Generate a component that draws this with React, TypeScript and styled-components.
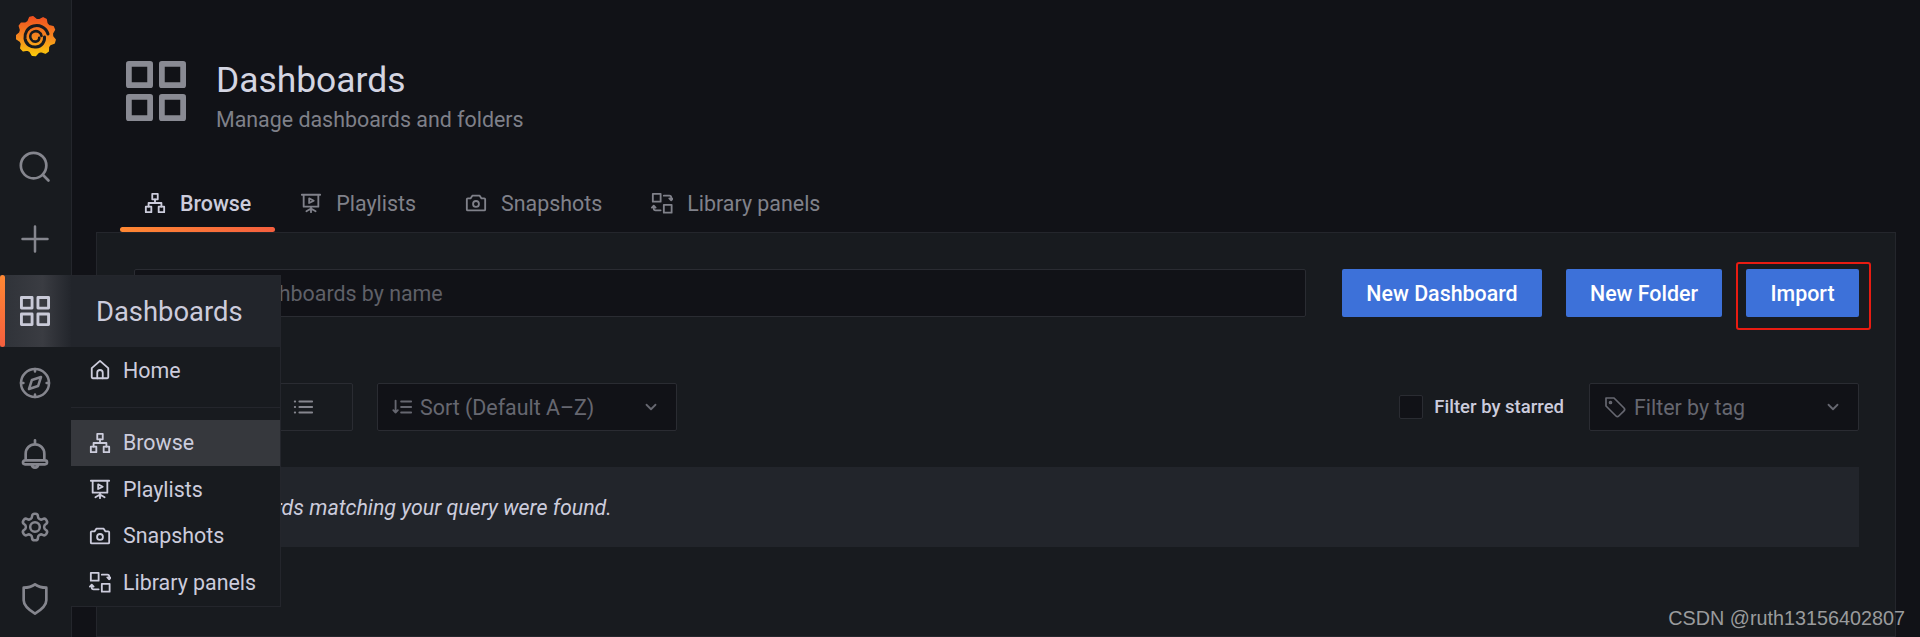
import React from "react";
import styled, { createGlobalStyle } from "styled-components";

const Global = createGlobalStyle`
  html, body { margin: 0; padding: 0; background: #111217; }
  * { box-sizing: border-box; }
  body { font-family: Roboto, "Liberation Sans", sans-serif; color: #ccccdc; }
`;

const Page = styled.div`
  position: relative;
  display: flex;
  width: 1920px;
  height: 637px;
  overflow: hidden;
  background: #111217;
`;

const Sidebar = styled.nav`
  flex: 0 0 72px;
  display: flex;
  flex-direction: column;
  background: #181b1f;
  border-right: 1px solid #24262c;
  position: relative;
`;

const LogoSlot = styled.div`
  height: 131px;
  display: flex;
  justify-content: center;
  align-items: flex-start;
  padding-top: 15px;
`;

const SideItem = styled.div<{ $active?: boolean }>`
  position: relative;
  flex: 0 0 72px;
  display: flex;
  align-items: center;
  justify-content: center;
  padding-right: 1px;
  color: ${(p) => (p.$active ? "#c9cad8" : "#85868e")};
  background: ${(p) => (p.$active ? "linear-gradient(90deg,#2f3238 0%,#3a3c42 60%,#23262c 100%)" : "transparent")};
  ${(p) =>
    p.$active &&
    `&::before{content:"";position:absolute;left:0;top:0;bottom:0;width:5px;border-radius:3px;background:linear-gradient(180deg,#ff8833,#f55f3e);}`}
`;

const Main = styled.main`
  flex: 1;
  display: flex;
  flex-direction: column;
  padding: 0 24px 0 24px;
  min-width: 0;
`;

const Header = styled.header`
  display: flex;
  align-items: flex-start;
  padding: 62px 0 0 30px;
  height: 178px;
`;

const HeaderIcon = styled.div`
  width: 60px;
  height: 60px;
  margin: -1px 30px 0 0;
  color: #898a93;
`;

const Title = styled.h1`
  margin: 0;
  font-weight: 400;
  font-size: 35.4px;
  line-height: 37px;
  color: #d4d5e2;
`;

const Subtitle = styled.div`
  margin-top: 8px;
  font-size: 21.4px;
  line-height: 26px;
  color: #7f8089;
`;

const Tabs = styled.div`
  display: flex;
  padding-left: 24px;
  height: 54px;
`;

const Tab = styled.div<{ $active?: boolean }>`
  position: relative;
  display: flex;
  align-items: center;
  gap: 14px;
  padding: 0 24px;
  height: 50px;
  margin-right: 1px;
  font-size: 21.4px;
  font-weight: ${(p) => (p.$active ? 500 : 400)};
  color: ${(p) => (p.$active ? "#ccccdc" : "#80818a")};
  ${(p) =>
    p.$active &&
    `&::after{content:"";position:absolute;left:0;right:0;bottom:-4px;height:5px;border-radius:3px;background:linear-gradient(90deg,#ff8833,#f55f3e);}`}
`;

const Panel = styled.section`
  flex: 1;
  background: #181b1f;
  border: 1px solid #24262c;
  padding: 36px 36px 0 37px;
`;

const TopRow = styled.div`
  display: flex;
  align-items: center;
  height: 48px;
`;

const SearchInput = styled.div`
  flex: 1;
  height: 48px;
  display: flex;
  align-items: center;
  padding-left: 38px;
  background: #111217;
  border: 1px solid #2a2c32;
  border-radius: 2px;
  font-size: 21.4px;
  color: #5f6068;
`;

const Button = styled.div<{ $width: number; $gap: number }>`
  flex: 0 0 ${(p) => p.$width}px;
  margin-left: ${(p) => p.$gap}px;
  height: 48px;
  display: flex;
  align-items: center;
  justify-content: center;
  background: #3d71d9;
  border-radius: 2px;
  color: #fff;
  font-size: 21.4px;
  font-weight: 500;
`;

const Highlight = styled.div`
  position: absolute;
  left: 1736px;
  top: 262px;
  width: 135px;
  height: 68px;
  border: 2px solid #e81c12;
  border-radius: 3px;
`;

const FilterRow = styled.div`
  display: flex;
  align-items: center;
  margin-top: 66px;
  height: 48px;
`;

const Toggle = styled.div`
  width: 219px;
  height: 48px;
  display: flex;
  align-items: center;
  justify-content: flex-end;
  padding-right: 38px;
  border: 1px solid #2a2c32;
  border-radius: 2px;
  color: #85868e;
`;

const Select = styled.div<{ $width: number }>`
  flex: 0 0 ${(p) => p.$width}px;
  height: 48px;
  display: flex;
  align-items: center;
  gap: 7px;
  padding: 0 16px 0 13px;
  background: #111217;
  border: 1px solid #2a2c32;
  border-radius: 2px;
  font-size: 21.4px;
  color: #666770;
`;

const SelectLabel = styled.span`
  flex: 1;
`;

const Sort = styled(Select)`
  margin-left: 24px;
`;

const Checkbox = styled.div`
  margin-left: auto;
  width: 24px;
  height: 24px;
  background: #111217;
  border: 1px solid #2a2c32;
  border-radius: 2px;
`;

const CheckLabel = styled.span`
  margin: 0 25px 0 11px;
  font-size: 18.5px;
  font-weight: 500;
  color: #ccccdc;
`;

const Message = styled.div`
  margin-top: 36px;
  height: 80px;
  display: flex;
  align-items: center;
  padding-left: 29px;
  background: #22252b;
  font-size: 21.4px;
  font-style: italic;
  color: #ccccdc;
`;

const Menu = styled.div`
  position: absolute;
  left: 71px;
  top: 275px;
  width: 210px;
  height: 332px;
  background: #181b1f;
  border: 1px solid #24262c;
  border-left: 0;
`;

const MenuHead = styled.div`
  height: 71px;
  display: flex;
  align-items: center;
  padding-left: 25px;
  background: #22252b;
  font-size: 27.4px;
  color: #ccccdc;
`;

const MenuItem = styled.div<{ $active?: boolean }>`
  height: 46.5px;
  display: flex;
  align-items: center;
  gap: 12px;
  padding-left: 18px;
  font-size: 21.4px;
  color: #ccccdc;
  background: ${(p) => (p.$active ? "#36383d" : "transparent")};
`;

const Divider = styled.div`
  height: 1px;
  margin: 13px 0 12px;
  background: #24262c;
`;

const Watermark = styled.div`
  position: absolute;
  right: 15px;
  bottom: 7px;
  font-family: "Liberation Sans", sans-serif;
  font-size: 19.8px;
  color: #9a9b9d;
`;

type IconProps = { size?: number };

const Svg: React.FC<IconProps & { children: React.ReactNode; w?: number }> = ({ size = 22, children, w = 2 }) => (
  <svg width={size} height={size} viewBox="0 0 24 24" fill="none" stroke="currentColor" strokeWidth={w} strokeLinecap="round" strokeLinejoin="round">
    {children}
  </svg>
);

const Apps: React.FC<{ size?: number; w?: number }> = ({ size = 30, w = 2.3 }) => (
  <svg width={size} height={size} viewBox="0 0 24 24" fill="none" stroke="currentColor" strokeWidth={w} strokeLinejoin="round">
    <rect x="1.15" y="1.15" width="8.5" height="8.5" />
    <rect x="14.35" y="1.15" width="8.5" height="8.5" />
    <rect x="1.15" y="14.35" width="8.5" height="8.5" />
    <rect x="14.35" y="14.35" width="8.5" height="8.5" />
  </svg>
);

const Sitemap = () => (
  <Svg w={2}>
    <rect x="9" y="2" width="6" height="6" />
    <rect x="2" y="16" width="6" height="6" />
    <rect x="16" y="16" width="6" height="6" />
    <path d="M12 8v4M5 16v-4h14v4" />
  </Svg>
);

const PlaylistIcon = () => (
  <Svg w={2}>
    <path d="M2 3h20M4 3v13h16V3M12 16v6M12 18l-5 3M12 18l5 3" />
    <path d="M10 7l5 2.5-5 2.5z" />
  </Svg>
);

const CameraIcon = () => (
  <Svg w={2}>
    <path d="M3 7h3l2-3h8l2 3h3a1 1 0 0 1 1 1v11a1 1 0 0 1-1 1H3a1 1 0 0 1-1-1V8a1 1 0 0 1 1-1z" />
    <circle cx="12" cy="13" r="3.2" />
  </Svg>
);

const LibraryIcon = () => (
  <Svg w={2}>
    <rect x="2" y="2" width="8.5" height="8.5" />
    <rect x="14" y="14" width="8.5" height="8.5" />
    <path d="M14 4h6a2 2 0 0 1 2 2v3M20 7l2 2 2-2M10.5 20H5a2 2 0 0 1-2-2v-3M1 17l2-2 2 2" />
  </Svg>
);

const HomeIcon = () => (
  <Svg w={2}>
    <path d="M4 21a1 1 0 0 1-1-1V10l9-8 9 8v10a1 1 0 0 1-1 1z" />
    <path d="M9 21v-6a3 3 0 0 1 6 0v6" />
  </Svg>
);

const Chevron = () => (
  <Svg size={18} w={2.4}>
    <path d="M6 9l6 6 6-6" />
  </Svg>
);

const Logo = () => {
  const teeth = 9;
  let d = "";
  for (let i = 0; i < teeth * 4; i++) {
    const a = (i / (teeth * 4)) * Math.PI * 2 - 1.2;
    const r = i % 4 === 0 || i % 4 === 1 ? 19.5 : 16.5;
    d += `${i === 0 ? "M" : "L"}${(20 + r * Math.cos(a)).toFixed(2)} ${(21 + r * Math.sin(a)).toFixed(2)}`;
  }
  return (
    <svg width="40" height="42" viewBox="0 0 40 42">
      <defs>
        <linearGradient id="lg" x1="0" y1="0" x2="0" y2="1">
          <stop offset="0" stopColor="#f0501f" />
          <stop offset="0.55" stopColor="#f58a1f" />
          <stop offset="1" stopColor="#fbca0a" />
        </linearGradient>
      </defs>
      <path d={d + "Z"} fill="url(#lg)" stroke="url(#lg)" strokeWidth="1.5" strokeLinejoin="round" />
      <path d="M32 19 C30 12 23 9.5 17.5 11 C11.5 12.5 8.5 18 9 23.5 C9.8 29.5 15 32.5 20 32 C25.5 31.5 29 27 28.5 22" fill="none" stroke="#181b1f" strokeWidth="3" strokeLinecap="round" />
      <path d="M25.5 21 C25 17 21 15.5 18 16.5 C15 17.5 13.8 20.5 14.5 23 C15.3 25.8 18 27 20.5 26.5 C22.5 26 23.5 24.2 23.2 22.8" fill="none" stroke="#181b1f" strokeWidth="2.6" strokeLinecap="round" />
    </svg>
  );
};

const ListIcon = () => (
  <Svg size={22} w={2}>
    <path d="M8 6h14M8 12h14M8 18h14M3 6h.5M3 12h.5M3 18h.5" />
  </Svg>
);

const SortIcon = () => (
  <Svg size={22} w={2}>
    <path d="M5 5v13M2.5 15.5L5 18l2.5-2.5M11 6h11M11 12h11M11 18h11" />
  </Svg>
);

const TagIcon = () => (
  <Svg size={24} w={1.7}>
    <path d="M3 3h8l10 10a2 2 0 0 1 0 2.8L15.8 21a2 2 0 0 1-2.8 0L3 11z" />
    <circle cx="7.5" cy="7.5" r="1" />
  </Svg>
);

const SearchIcon = () => (
  <Svg size={34} w={1.9}>
    <circle cx="11" cy="11" r="9" />
    <path d="M21.5 21.5l-4-4" />
  </Svg>
);

const PlusIcon = () => (
  <Svg size={30} w={2}>
    <path d="M12 2v20M2 12h20" />
  </Svg>
);

const CompassIcon = () => (
  <Svg size={32} w={1.9}>
    <circle cx="12" cy="12" r="10.5" />
    <path d="M16.5 7.5l-2.2 6.8-6.8 2.2 2.2-6.8z" />
    <path d="M12 1.5v1.8M12 20.7v1.8M1.5 12h1.8M20.7 12h1.8" />
  </Svg>
);

const BellIcon = () => (
  <Svg size={32} w={2}>
    <path d="M12 1v2.5M5 16v-5a7 7 0 0 1 14 0v5M3 17.5a1.5 1.5 0 0 1 1.5-1.5h15a1.5 1.5 0 0 1 0 3h-15A1.5 1.5 0 0 1 3 17.5zM9.5 19a2.5 2.5 0 0 0 5 0" />
  </Svg>
);

const GearIcon = () => (
  <Svg size={32} w={1.9}>
    <path d="M12.22 2h-.44a2 2 0 0 0-2 2v.18a2 2 0 0 1-1 1.73l-.43.25a2 2 0 0 1-2 0l-.15-.08a2 2 0 0 0-2.73.73l-.22.38a2 2 0 0 0 .73 2.73l.15.1a2 2 0 0 1 1 1.72v.51a2 2 0 0 1-1 1.74l-.15.09a2 2 0 0 0-.73 2.73l.22.38a2 2 0 0 0 2.73.73l.15-.08a2 2 0 0 1 2 0l.43.25a2 2 0 0 1 1 1.73V20a2 2 0 0 0 2 2h.44a2 2 0 0 0 2-2v-.18a2 2 0 0 1 1-1.73l.43-.25a2 2 0 0 1 2 0l.15.08a2 2 0 0 0 2.73-.73l.22-.39a2 2 0 0 0-.73-2.73l-.15-.08a2 2 0 0 1-1-1.74v-.5a2 2 0 0 1 1-1.74l.15-.09a2 2 0 0 0 .73-2.73l-.22-.38a2 2 0 0 0-2.73-.73l-.15.08a2 2 0 0 1-2 0l-.43-.25a2 2 0 0 1-1-1.73V4a2 2 0 0 0-2-2z" />
    <circle cx="12" cy="12" r="3.6" />
  </Svg>
);

const ShieldIcon = () => (
  <Svg size={32} w={2}>
    <path d="M3.5 3.5C8 3.5 10 2.5 12 1c2 1.5 4 2.5 8.5 2.5V13c0 4-3.5 7-8.5 10-5-3-8.5-6-8.5-10z" />
  </Svg>
);

export default function App() {
  return (
    <Page>
      <Global />
      <Sidebar>
        <LogoSlot>
          <Logo />
        </LogoSlot>
        <SideItem><SearchIcon /></SideItem>
        <SideItem><PlusIcon /></SideItem>
        <SideItem $active><Apps /></SideItem>
        <SideItem><CompassIcon /></SideItem>
        <SideItem><BellIcon /></SideItem>
        <SideItem><GearIcon /></SideItem>
        <SideItem><ShieldIcon /></SideItem>
      </Sidebar>
      <Main>
        <Header>
          <HeaderIcon><Apps size={60} /></HeaderIcon>
          <div>
            <Title>Dashboards</Title>
            <Subtitle>Manage dashboards and folders</Subtitle>
          </div>
        </Header>
        <Tabs>
          <Tab $active><Sitemap />Browse</Tab>
          <Tab><PlaylistIcon />Playlists</Tab>
          <Tab><CameraIcon />Snapshots</Tab>
          <Tab><LibraryIcon />Library panels</Tab>
        </Tabs>
        <Panel>
          <TopRow>
            <SearchInput>Search dashboards by name</SearchInput>
            <Button $width={200} $gap={36}>New Dashboard</Button>
            <Button $width={156} $gap={24}>New Folder</Button>
            <Button $width={113} $gap={24}>Import</Button>
          </TopRow>
          <FilterRow>
            <Toggle><ListIcon /></Toggle>
            <Sort $width={300}><SortIcon /><SelectLabel>Sort (Default A–Z)</SelectLabel><Chevron /></Sort>
            <Checkbox />
            <CheckLabel>Filter by starred</CheckLabel>
            <Select $width={270}><TagIcon /><SelectLabel>Filter by tag</SelectLabel><Chevron /></Select>
          </FilterRow>
          <Message>No dashboards matching your query were found.</Message>
        </Panel>
      </Main>
      <Highlight />
      <Menu>
        <MenuHead>Dashboards</MenuHead>
        <MenuItem><HomeIcon />Home</MenuItem>
        <Divider />
        <MenuItem $active><Sitemap />Browse</MenuItem>
        <MenuItem><PlaylistIcon />Playlists</MenuItem>
        <MenuItem><CameraIcon />Snapshots</MenuItem>
        <MenuItem><LibraryIcon />Library panels</MenuItem>
      </Menu>
      <Watermark>CSDN @ruth13156402807</Watermark>
    </Page>
  );
}
